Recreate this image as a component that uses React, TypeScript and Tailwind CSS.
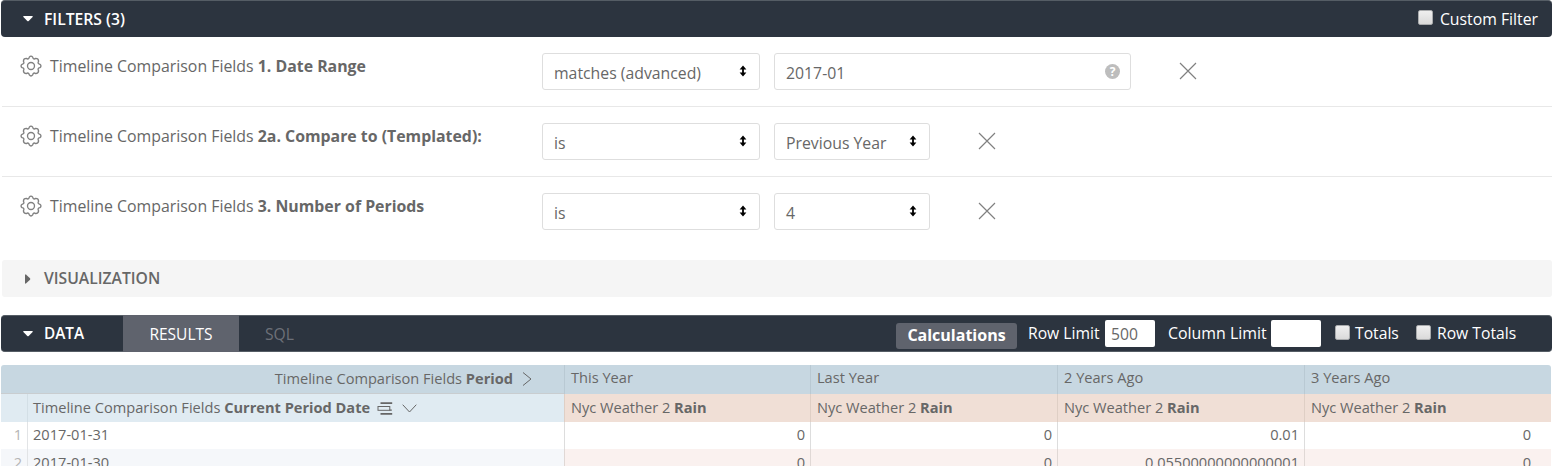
import React from "react";

const Gear = () => (
  <svg className="h-[22px] w-[22px] shrink-0" viewBox="0 0 22 22" fill="none" stroke="#808080" strokeWidth="1.35" strokeLinejoin="round">
    <path d="M9.3 2.1Q11 0 12.7 2.1C13.1 4.1 14.1 4.4 15.7 3.4Q18.5 3.4 18.6 6.2C17.6 8 18 8.8 19.9 9.3Q22 11 19.9 12.7C18 13.2 17.6 14 18.6 15.8Q18.5 18.6 15.7 18.6C14.1 17.6 13.1 17.9 12.7 19.9Q11 22 9.3 19.9C8.9 17.9 7.9 17.6 6.3 18.6Q3.5 18.6 3.4 15.8C4.4 14 4 13.2 2.1 12.7Q0 11 2.1 9.3C4 8.8 4.4 8 3.4 6.2Q3.5 3.4 6.3 3.4C7.9 4.4 8.9 4.1 9.3 2.1Z" />
    <circle cx="11" cy="11" r="3.5" />
  </svg>
);

const Close = () => (
  <svg className="mb-[2px] h-[18px] w-[18px] shrink-0" viewBox="0 0 18 18" fill="none" stroke="#808080" strokeWidth="1.15">
    <path d="M1 1l16 16M17 1L1 17" />
  </svg>
);

const UpDown = () => (
  <svg className="mb-[1px] h-[12px] w-[8px] shrink-0" viewBox="0 0 8 12" fill="#000">
    <path d="M4 0.5L7.4 4.5H4.9V7.5H7.4L4 11.5L0.6 7.5H3.1V4.5H0.6Z" />
  </svg>
);

const Caret = ({ color = "#fff" }: { color?: string }) => (
  <svg className="h-[6px] w-[10px] shrink-0" viewBox="0 0 10 6">
    <path d="M0.6 0H9.4Q10 0.3 9.6 0.9L5.7 5Q5 5.6 4.3 5L0.4 0.9Q0 0.3 0.6 0Z" fill={color} />
  </svg>
);

const Check = () => (
  <span className="h-[15px] w-[15px] shrink-0 rounded-[2px] border border-[#a9abad] bg-linear-to-b from-[#efefef] to-[#dadada]" />
);

const Select = ({ text, width }: { text: string; width: string }) => (
  <div className={`flex h-[37px] items-center justify-between rounded-[3px] border border-[#dedede] pr-[12px] pl-[11px] ${width}`}>
    <span className="pt-[4px]">{text}</span>
    <UpDown />
  </div>
);

const FilterRow = ({ name, last, children }: { name: string; last?: boolean; children: React.ReactNode }) => (
  <div className={`ml-[2px] flex pt-[16px] ${last ? "h-[83px]" : "h-[70px] border-b border-[#e8e8e8]"}`}>
    <div className="flex h-[26px] w-[540px] items-center pl-[18px]">
      <Gear />
      <span className="ml-[8px] pt-[2px] text-[15.87px]">
        Timeline Comparison Fields <b>{name}</b>
      </span>
    </div>
    <div className="flex h-[37px] gap-[14px] text-[15.8px]">{children}</div>
  </div>
);

const Sort = () => (
  <svg className="ml-[7px] h-[13px] w-[16px]" viewBox="0 0 16 13" fill="none" stroke="#666" strokeWidth="1.8">
    <path d="M3.5 1.2H15.2M3.5 11.8H15.2" />
    <path d="M12.5 8.1H14.8" strokeWidth="1.2" />
    <rect x="1" y="4.5" width="11.8" height="3.8" strokeWidth="1" />
  </svg>
);

const columns = [
  { label: "This Year", a: "0", b: "0", width: "w-[246px]", pad: "pr-[5px]" },
  { label: "Last Year", a: "0", b: "0", width: "w-[247px]", pad: "pr-[5px]" },
  { label: "2 Years Ago", a: "0.01", b: "0.05500000000000001", width: "w-[247px]", pad: "pr-[5px]" },
  { label: "3 Years Ago", a: "0", b: "0", width: "w-[247px]", pad: "pr-[20px]" },
];

export default function App() {
  return (
    <div className="flex h-[468px] w-[1552px] flex-col overflow-hidden bg-white font-['Open_Sans',sans-serif] whitespace-nowrap text-[#676767]">
      <div className="ml-px flex h-[37px] shrink-0 items-center rounded-[4px] border-t border-[#555d65] bg-[#2c343f] pl-[22px] text-white">
        <Caret />
        <span className="ml-[11px] pt-px text-[15.7px] font-semibold">FILTERS (3)</span>
        <div className="mr-[14px] ml-auto flex items-center gap-[7px] text-[15.8px]">
          <span className="flex pb-[4px]"><Check /></span>
          <span className="pt-px">Custom Filter</span>
        </div>
      </div>

      <FilterRow name="1. Date Range">
        <Select text="matches (advanced)" width="w-[218px]" />
        <div className="flex w-[357px] items-center justify-between rounded-[3px] border border-[#dedede] pr-[10px] pl-[11px]">
          <span className="pt-[4px]">2017-01</span>
          <span className="flex h-[15px] w-[15px] items-center justify-center rounded-full bg-[#bdbdbd] text-[12px] leading-none font-bold text-white">?</span>
        </div>
        <div className="ml-[34px] flex items-center"><Close /></div>
      </FilterRow>
      <FilterRow name="2a. Compare to (Templated):">
        <Select text="is" width="w-[218px]" />
        <Select text="Previous Year" width="w-[156px]" />
        <div className="ml-[34px] flex items-center"><Close /></div>
      </FilterRow>
      <FilterRow name="3. Number of Periods" last>
        <Select text="is" width="w-[218px]" />
        <Select text="4" width="w-[156px]" />
        <div className="ml-[34px] flex items-center"><Close /></div>
      </FilterRow>

      <div className="ml-[2px] flex h-[37px] shrink-0 items-center rounded-[3px] bg-[#f5f5f5] pl-[23px]">
        <svg className="h-[10px] w-[6px]" viewBox="0 0 6 10"><path d="M0 0.7Q0.3 0 0.9 0.4L5 4.3Q5.6 5 5 5.7L0.9 9.6Q0.3 10 0 9.3Z" fill="#666" /></svg>
        <span className="ml-[13px] pt-px text-[15.7px] font-semibold">VISUALIZATION</span>
      </div>

      <div className="mt-[18px] ml-px flex h-[37px] shrink-0 items-center rounded-[4px] border-t border-b border-[#555d65] bg-[#2c343f] pl-[22px] text-[15.7px] text-white">
        <Caret />
        <span className="ml-[11px] w-[79px] text-[15.3px] font-semibold">DATA</span>
        <span className="flex h-[37px] w-[116px] items-center justify-center bg-[#5f636d] pt-[2px] text-[15.5px]">RESULTS</span>
        <span className="ml-[26px] pt-[2px] text-[#6c7078]">SQL</span>
        <div className="mr-[36px] ml-auto flex items-center">
          <span className="mt-[4px] flex h-[26px] w-[121px] items-center justify-center rounded-[3px] bg-[#5f636d] pb-[2px] text-[16px] font-bold">Calculations</span>
          <span className="ml-[11px] w-[77px]">Row Limit</span>
          <span className="flex h-[27px] w-[50px] items-center rounded-[2px] bg-white pt-[2px] pl-[6px] text-[#676767]">500</span>
          <span className="ml-[13px] w-[103px] text-[15.9px]">Column Limit</span>
          <span className="h-[27px] w-[50px] rounded-[2px] bg-white" />
          <span className="ml-[14px] flex pb-[2px]"><Check /></span>
          <span className="ml-[5px] w-[61px]">Totals</span>
          <span className="flex pb-[2px]"><Check /></span>
          <span className="ml-[6px] w-[79px]">Row Totals</span>
        </div>
      </div>

      <div className="mt-[13px] ml-px flex h-[101px] w-[1550px] shrink-0 overflow-hidden rounded-t-[3px] text-[14.6px]">
        <div className="w-[563px] shrink-0">
          <div className="flex h-[29px] items-center justify-end border-b border-[#c9cdd0] bg-[#c7d7e1] pr-[32px]">
            <span>Timeline Comparison Fields <b>Period</b></span>
            <svg className="ml-[9px] h-[14px] w-[10px]" viewBox="0 0 10 14" fill="none" stroke="#666"><path d="M1 0.5L9 7L1 13.5" /></svg>
          </div>
          <div className="flex h-[28px] bg-[#e0ebf2]">
            <span className="w-[27px] border-r border-[#d3dfe6]" />
            <div className="flex items-center pl-[5px]">
              <span>Timeline Comparison Fields <b>Current Period Date</b></span>
              <Sort />
              <svg className="ml-[9px] h-[9px] w-[15px]" viewBox="0 0 15 9" fill="none" stroke="#666"><path d="M0.7 0.7L7.5 8L14.3 0.7" /></svg>
            </div>
          </div>
          <div className="flex h-[27px] items-center">
            <span className="flex h-full w-[27px] items-center justify-end border-r border-[#e2e4e6] pr-[5px] pb-px text-[#b5b5b5]">1</span>
            <span className="ml-[5px] pb-px">2017-01-31</span>
          </div>
          <div className="flex h-[28px] items-center bg-[#f5f7fa]">
            <span className="flex h-full w-[27px] items-center justify-end border-r border-[#e2e4e6] pr-[5px] text-[#b5b5b5]">2</span>
            <span className="ml-[5px]">2017-01-30</span>
          </div>
        </div>
        {columns.map((c) => (
          <div key={c.label} className={`shrink-0 ${c.width}`}>
            <div className="flex h-[29px] items-center border-l border-[#b9c9d3] bg-[#c7d7e1] pb-[3px] pl-[6px]">{c.label}</div>
            <div className="flex h-[28px] items-center border-l border-[#dfcfc5] bg-[#f0dfd6] pl-[6px]">
              <span>Nyc Weather 2 <b>Rain</b></span>
            </div>
            <div className={`flex h-[27px] items-center justify-end border-l border-[#dddddd] pb-px ${c.pad}`}>{c.a}</div>
            <div className={`flex h-[28px] items-center justify-end border-l border-[#e0d8d5] bg-[#faf1ef] ${c.pad}`}>{c.b}</div>
          </div>
        ))}
      </div>
    </div>
  );
}
